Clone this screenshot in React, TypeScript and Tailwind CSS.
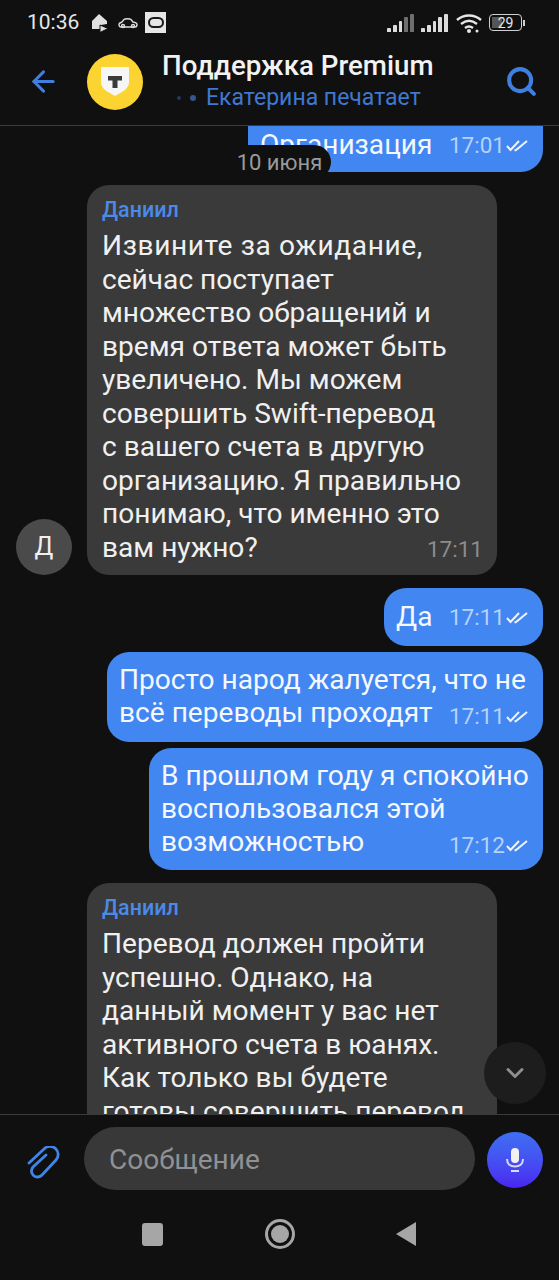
import type { ReactNode } from 'react';
import { ArrowLeft, ChevronDown, Search } from 'lucide-react';

function Checks() {
  return (
    <svg width="23" height="14" viewBox="0 0 23 14" fill="none" stroke="#eef4ff" strokeWidth="2" className="ml-[1px] shrink-0">
      <path d="M1 8l3.500 4L13 3" />
      <path d="M8.500 12.500L10 12 21 3" />
    </svg>
  );
}

function Time({ value, read = true, className = 'text-[#b5d2fb]' }: { value: string; read?: boolean; className?: string }) {
  return (
    <span className={`flex items-center text-[22.500px] leading-[26px] whitespace-nowrap ${className}`}>
      {value}
      {read && <Checks />}
    </span>
  );
}

function Signal({ dim }: { dim?: boolean }) {
  const heights = [4, 7, 11, 15, 18];
  return (
    <span className="flex items-end gap-[2px] h-[18px]">
      {heights.map((h, i) => (
        <span
          key={h}
          className={`w-[3.800px] rounded-t-[1px] ${dim && i >= 3 ? 'bg-[#6e6e6e]' : 'bg-[#dcdcdc]'}`}
          style={{ height: h }}
        />
      ))}
    </span>
  );
}

function StatusBar() {
  return (
    <div className="h-[44px] shrink-0 flex items-center justify-between pl-[27px] pr-[34px] pt-[1px] text-[#e6e6e6]">
      <div className="flex items-center">
        <span className="text-[21px] leading-none">10:36</span>
        <svg width="18" height="20" viewBox="0 0 18 20" className="ml-[12px]" fill="#e0e0e0">
          <path d="M8 1l8 7v3l-6 1v4H1V8z" />
          <path d="M9 12l8 3.500-8 4z" stroke="#101010" strokeWidth="1" />
        </svg>
        <svg width="20" height="12" viewBox="0 0 20 12" className="ml-[9px]" fill="none" stroke="#dcdcdc" strokeWidth="1.400">
          <path d="M1 7.500c0-1.500 1.500-2 3-2.500l2-2.500c1-1 6-1 7 0l2 2.500c2 .3 4 1 4 2.500 0 2-1 2.500-2 2.500H3c-1 0-2-.500-2-2.500z" />
          <circle cx="5" cy="9" r="1.500" />
          <circle cx="15" cy="9" r="1.500" />
        </svg>
        <span className="ml-[7px] w-[21px] h-[21px] bg-[#e6e6e6] flex items-center justify-center">
          <span className="w-[16px] h-[11px] rounded-full border-[2.500px] border-[#1a1a1a]" />
        </span>
      </div>
      <div className="flex items-center">
        <Signal dim />
        <span className="w-[7px]" />
        <Signal />
        <svg width="26" height="20" viewBox="0 0 26 20" className="ml-[8px]" fill="none" stroke="#e6e6e6" strokeWidth="2.400">
          <path d="M1 7c7-6 17-6 24 0" />
          <path d="M5 11c5-4 11-4 16 0" />
          <path d="M9 15c2.500-2 5.500-2 8 0" />
          <circle cx="13" cy="18" r="2" fill="#e6e6e6" stroke="none" />
          <circle cx="21" cy="18" r="1.500" fill="#e6e6e6" stroke="none" />
        </svg>
        <span className="relative ml-[7px] w-[33px] h-[17px] rounded-[4px] border border-[#cfcfcf] flex items-center justify-center text-[14px] leading-none text-[#e6e6e6]">
          <span className="absolute left-[2px] top-[2px] bottom-[2px] w-[10px] bg-[#555555]" />
          <span className="relative">29</span>
        </span>
        <span className="ml-[1px] w-[2px] h-[6px] bg-[#cfcfcf]" />
      </div>
    </div>
  );
}

function Header() {
  return (
    <div className="h-[82px] shrink-0 flex items-center border-b border-[#3a3a3a] pl-[27px] pr-[21px] pb-[6px]">
      <ArrowLeft size={33} strokeWidth={2.200} className="text-[#3f7fe0] shrink-0" />
      <div className="ml-[27px] w-[56px] h-[56px] rounded-full bg-[#fbd431] flex items-center justify-center shrink-0">
        <svg width="30" height="31" viewBox="0 0 30 31">
          <path d="M1 1h28v15c0 7-7 10-14 14C8 26 1 23 1 16z" fill="#f6f6f6" />
          <path d="M8 10h14v4.500h-4.500V22h-5v-7.500H8z" fill="#3a3a3a" />
        </svg>
      </div>
      <div className="ml-[19px] flex-1 min-w-0 -mt-[2px]">
        <div className="text-[27.700px] leading-[33px] font-medium text-[#f2f2f2] whitespace-nowrap">Поддержка Premium</div>
        <div className="flex items-center pl-[15px] pt-[1px] text-[23px] leading-[30px] text-[#3f78d0] whitespace-nowrap">
          <span className="w-[4px] h-[4px] rounded-full bg-[#24395c]" />
          <span className="ml-[9px] w-[6px] h-[6px] rounded-full bg-[#35578f]" />
          <span className="ml-[10px]">Екатерина печатает</span>
        </div>
      </div>
      <Search size={33} strokeWidth={3} className="text-[#3f7fe0] shrink-0" />
    </div>
  );
}

function Outgoing({ children, className }: { children: ReactNode; className: string }) {
  return (
    <div className={`self-end rounded-[22px] bg-[#4286f2] pl-[12px] pr-[14px] text-[28.100px] text-[#f4f8ff] ${className}`}>
      {children}
    </div>
  );
}

function Incoming({ lines, time }: { lines: string[]; time?: string }) {
  return (
    <div className="w-[410px] rounded-[22px] bg-[#3a3a3a] pl-[15px] pr-[14px] pt-[12px] pb-[11px] shrink-0">
      <div className="text-[21.500px] leading-[26px] font-medium text-[#4a8ae8]">Даниил</div>
      <div className="mt-[6px] text-[28.100px] leading-[33.500px] text-[#f0f0f0]">
        {lines.map((l, i) => (
          <div key={l} className={`whitespace-nowrap ${time && i === lines.length - 1 ? 'flex justify-between items-end' : ''}`}>
            <span className={time && i === 0 ? 'tracking-[0.6px]' : ''}>{l}</span>
            {time && i === lines.length - 1 && <Time value={time} read={false} className="text-[#8c8c8c] pb-[2px]" />}
          </div>
        ))}
      </div>
    </div>
  );
}

export default function App() {
  return (
    <div className="relative w-[559px] h-[1280px] overflow-hidden bg-[#101010] flex flex-col font-['Roboto',sans-serif]">
      <StatusBar />
      <Header />

      <div className="relative flex-1 min-h-0 overflow-hidden px-[16px]">
        <div className="flex flex-col">
          <Outgoing className="w-[295px] h-[46px] !rounded-t-none flex items-center justify-between pb-[8px] overflow-hidden">
            <span>Организация</span>
            <Time value="17:01" />
          </Outgoing>

          <div className="mt-[13px] flex items-end">
            <div className="w-[56px] h-[56px] rounded-full bg-[#4a4a4a] flex items-center justify-center text-[25px] text-[#f0f0f0] shrink-0">Д</div>
            <div className="w-[15px] shrink-0" />
            <Incoming
              lines={[
                'Извините за ожидание,',
                'сейчас поступает',
                'множество обращений и',
                'время ответа может быть',
                'увеличено. Мы можем',
                'совершить Swift-перевод',
                'с вашего счета в другую',
                'организацию. Я правильно',
                'понимаю, что именно это',
                'вам нужно?',
              ]}
              time="17:11"
            />
          </div>

          <Outgoing className="mt-[13px] w-[159px] h-[58px] flex items-center justify-between">
            <span>Да</span>
            <Time value="17:11" />
          </Outgoing>

          <Outgoing className="mt-[6px] w-[436px] h-[90px] pt-[11px] leading-[33px]">
            <div className="whitespace-nowrap">Просто народ жалуется, что не</div>
            <div className="flex items-end justify-between whitespace-nowrap">
              <span>всё переводы проходят</span>
              <Time value="17:11" />
            </div>
          </Outgoing>

          <Outgoing className="mt-[6px] w-[394px] h-[122px] pt-[11px] leading-[33px]">
            <div className="whitespace-nowrap">В прошлом году я спокойно</div>
            <div className="whitespace-nowrap">воспользовался этой</div>
            <div className="flex items-end justify-between whitespace-nowrap">
              <span>возможностью</span>
              <Time value="17:12" />
            </div>
          </Outgoing>

          <div className="mt-[13px] pl-[71px]">
            <Incoming
              lines={[
                'Перевод должен пройти',
                'успешно. Однако, на',
                'данный момент у вас нет',
                'активного счета в юанях.',
                'Как только вы будете',
                'готовы совершить перевод',
                'в юанях, сообщите нам',
              ]}
            />
          </div>
        </div>

        {/* плашка даты поверх сообщений */}
        <div className="absolute left-[225px] top-[19px] w-[106px] h-[34px] pl-[3px] rounded-full bg-[#101010] flex items-center justify-center text-[22px] text-[#9a9a9a] whitespace-nowrap">
          10 июня
        </div>

        <div className="absolute left-[484px] top-[916px] w-[62px] h-[62px] rounded-full bg-[#1d1d1d] flex items-center justify-center">
          <ChevronDown size={28} strokeWidth={2.500} className="text-[#8f8f8f]" />
        </div>
      </div>

      <div className="h-[91px] shrink-0 border-t border-[#3a3a3a] bg-[#101010] flex items-start pt-[12px] pl-[27px] pr-[15px]">
        <svg width="34" height="34" viewBox="0 0 34 34" fill="none" stroke="#3f86e8" strokeWidth="2.800" strokeLinecap="round" className="shrink-0 mt-[19px]">
          <path d="M2 17L17 3a8 8 0 0 1 12 11L15 29a6 6 0 0 1-9-8L19 9" />
        </svg>
        <div className="ml-[23px] w-[391px] h-[63px] pt-[3px] rounded-full bg-[#383838] flex items-center pl-[25px] text-[28px] text-[#8f9194]">
          Сообщение
        </div>
        <div className="ml-[12px] w-[56px] h-[56px] mt-[5px] rounded-full bg-gradient-to-b from-[#3e6ff2] to-[#4a24f0] flex items-center justify-center shrink-0">
          <svg width="20" height="28" viewBox="0 0 20 28" fill="none">
            <rect x="6" y="2" width="8" height="15" rx="4" fill="#f2f2f2" />
            <path d="M2 13c0 5 3.500 7.500 8 7.500s8-2.500 8-7.500" stroke="#d8d8f8" strokeWidth="2" />
            <path d="M6 25h8" stroke="#d8d8f8" strokeWidth="2" />
          </svg>
        </div>
      </div>

      <div className="flex-none h-[75px] flex items-start justify-center pt-[13px] pr-[2px]">
        <div className="w-[21px] h-[23px] mt-[5px] rounded-[3px] bg-[#a6a6a6]" />
        <div className="ml-[102px] w-[30px] h-[30px] mt-[1px] rounded-full border-[3px] border-[#a6a6a6] flex items-center justify-center">
          <div className="w-[18px] h-[18px] rounded-full bg-[#a6a6a6]" />
        </div>
        <svg width="21" height="26" viewBox="0 0 21 26" className="ml-[100px] mt-[3px]">
          <path d="M21 1v24L1 13z" fill="#a6a6a6" />
        </svg>
      </div>
    </div>
  );
}
